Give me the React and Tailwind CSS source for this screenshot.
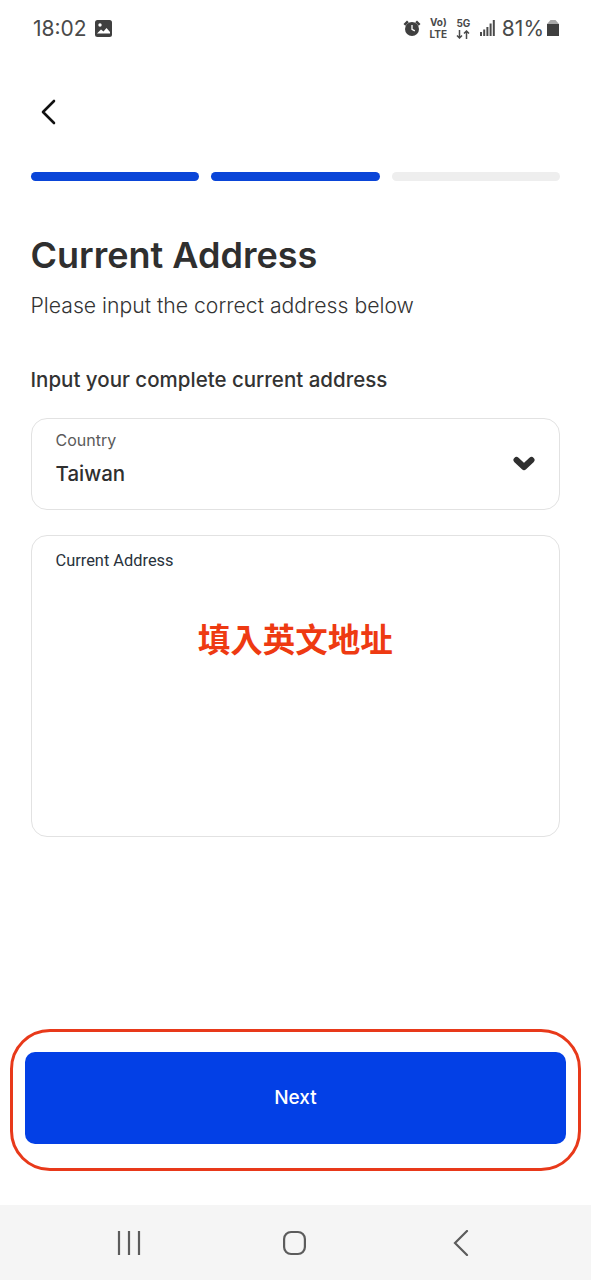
import React from "react";

function AlarmIcon() {
  return (
    <svg width="18" height="18" viewBox="0 0 18 18" fill="#3f3f3f">
      <circle cx="9" cy="10" r="7" />
      <path d="M0.500 5l3.500-3.500 1.800 1.800-3.500 3.500zM17.500 5l-3.500-3.500-1.800 1.800 3.500 3.500z" />
      <path d="M9 6v4.300l2.800 1.600" fill="none" stroke="#fff" strokeWidth="1.300" />
    </svg>
  );
}

function StatusBar() {
  return (
    <div className="flex h-[56px] items-center justify-between pl-[33px] pr-[32px] text-[#4a4a4a]">
      <div className="flex items-center gap-[8px]">
        <span className="text-[21px] leading-none">18:02</span>
        <svg width="17" height="17" viewBox="0 0 17 17">
          <rect width="17" height="17" rx="2.500" fill="#3f3f3f" />
          <circle cx="5" cy="5" r="1.700" fill="#fff" />
          <path d="M2 13.500l4-4 2.500 2 3-3.500 3.500 4v1.500z" fill="#fff" />
        </svg>
      </div>
      <div className="flex items-center">
        <AlarmIcon />
        <div className="ml-[9px] flex w-[17px] flex-col items-center text-[10px] font-bold leading-[12px]">
          <span>Vo)</span>
          <span>LTE</span>
        </div>
        <div className="ml-[9px] flex w-[15px] flex-col items-center text-[10px] font-bold leading-[12px]">
          <span>5G</span>
          <svg className="mt-[1px]" width="14" height="9" viewBox="0 0 14 9" fill="none" stroke="#4a4a4a" strokeWidth="1.500">
            <path d="M3.500 0v8M1 5.500l2.500 2.500L6 5.500M10.500 9V1M8 3.500L10.500 1 13 3.500" />
          </svg>
        </div>
        <svg className="ml-[9px]" width="15" height="16" viewBox="0 0 15 16" fill="#4a4a4a">
          <rect x="0" y="12" width="2" height="4" />
          <rect x="3.200" y="9.500" width="2" height="6.500" />
          <rect x="6.400" y="7" width="2" height="9" />
          <rect x="9.600" y="3.500" width="2" height="12.500" />
          <rect x="12.800" y="0" width="2" height="16" />
        </svg>
        <span className="ml-[7px] text-[21px] leading-none">81%</span>
        <svg className="ml-[3px]" width="12" height="16" viewBox="0 0 12 16">
          <path d="M3.500 0h5L12 4H0z" fill="#a8a8a8" />
          <rect y="4" width="12" height="12" fill="#3f3f3f" />
        </svg>
      </div>
    </div>
  );
}

export default function App() {
  return (
    <div
      className="flex h-[1280px] w-[591px] flex-col overflow-hidden bg-white"
      style={{ fontFamily: "Inter, 'Noto Sans CJK TC', sans-serif" }}
    >
      <StatusBar />

      <div className="flex flex-1 flex-col">
        <div className="pl-[30.500px] pr-[31px]">
          {/* back */}
          <div className="pl-[9px] pt-[43px]">
            <svg className="block" width="16" height="26" viewBox="0 0 16 26" fill="none" stroke="#111" strokeWidth="2.600" strokeLinecap="round" strokeLinejoin="round">
              <path d="M14 2L3 13l11 11" />
            </svg>
          </div>

          {/* progress */}
          <div className="mt-[47px] flex gap-[12px]">
            <div className="h-[9px] flex-1 rounded-full bg-[#0a45d8]" />
            <div className="h-[9px] flex-1 rounded-full bg-[#0a45d8]" />
            <div className="h-[9px] flex-1 rounded-full bg-[#eeeeee]" />
          </div>

          <h1 className="mt-[52px] text-[36px] font-semibold leading-[44px] text-[#2f2f2f]">Current Address</h1>
          <p className="mt-[14px] text-[21.200px] font-light leading-[28px] text-[#333]">Please input the correct address below</p>
          <p className="mt-[47px] text-[20.500px] font-medium leading-[28px] text-[#333]">Input your complete current address</p>

          {/* country */}
          <div className="mt-[24px] flex h-[92px] justify-between rounded-[16px] border border-[#e2e2e2] pl-[24px] pr-[24px]">
            <div className="flex flex-col pt-[11px]">
              <span className="text-[16px] leading-[20px] text-[#5a5a5a]">Country</span>
              <span className="mt-[10px] text-[20.500px] font-medium leading-[28px] text-[#2f2f2f]">Taiwan</span>
            </div>
            <svg className="self-center" width="22" height="16" viewBox="0 0 22 16" fill="none" stroke="#2f2f2f" strokeWidth="6" strokeLinecap="round" strokeLinejoin="round">
              <path d="M3.500 4l7.500 7 7.500-7" />
            </svg>
          </div>

          {/* address */}
          <div className="mt-[25px] flex h-[302px] flex-col rounded-[16px] border border-[#e2e2e2] px-[24px] pt-[14px]">
            <span className="text-[16.400px] leading-[22px] text-[#28323c]" style={{ fontFamily: "Roboto, sans-serif" }}>Current Address</span>
            <span className="mt-[47px] text-center text-[32.500px] font-bold leading-[44px] text-[#ee3a12]">填入英文地址</span>
          </div>
        </div>

        {/* next */}
        <div className="mt-auto px-[10px] pb-[34px]">
          <div className="rounded-[40px] border-[3px] border-[#e8391a] px-[12px] pb-[24px] pt-[20px]">
            <button className="flex h-[92px] w-full items-center justify-center rounded-[10px] bg-[#0340e6] text-[19px] font-medium text-white">
              Next
            </button>
          </div>
        </div>
      </div>

      {/* nav bar */}
      <div className="flex h-[75px] items-center bg-[#f5f5f5] pl-[117px]">
        <svg width="24" height="26" viewBox="0 0 24 26" stroke="#5c5c5c" strokeWidth="2.200" fill="none">
          <path d="M2 1v24M12 1v24M22 1v24" />
        </svg>
        <svg className="ml-[142px]" width="23" height="26" viewBox="0 0 23 26" stroke="#5c5c5c" strokeWidth="2.200" fill="none">
          <rect x="1.100" y="2" width="20.800" height="22" rx="7" />
        </svg>
        <svg className="ml-[147px]" width="16" height="26" viewBox="0 0 16 26" stroke="#5c5c5c" strokeWidth="2.200" fill="none" strokeLinecap="round">
          <path d="M14 1L2 13l12 12" />
        </svg>
      </div>
    </div>
  );
}
